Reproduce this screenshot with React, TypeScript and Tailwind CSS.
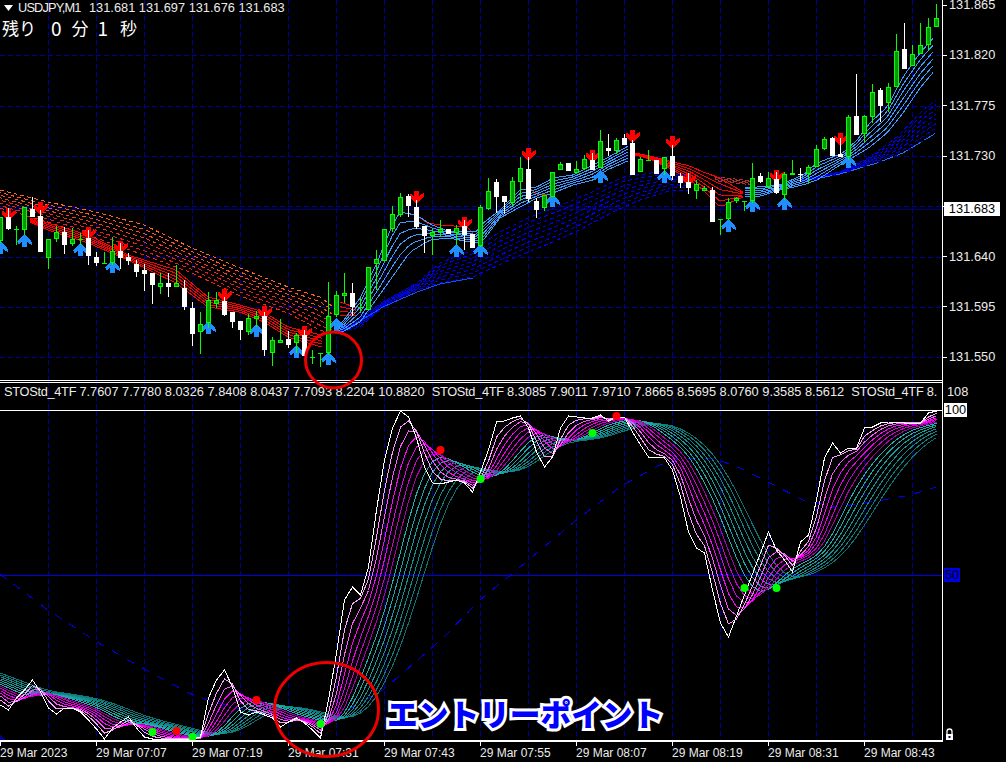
type Pt = [number, number];
type Band = { top: Pt[]; bottom: Pt[] };

// g = up bar, w = down bar: [kind, bodyTop, bodyBottom, wickTop, wickBottom]
const bars: [string, number, number, number, number][] = [
  ["g",217,241,217,243],["w",217,229,208,230],["g",229,229,226,245],["g",207,230,207,235],["w",209,217,197,217],
  ["w",216,252,210,252],["g",239,258,239,269],["g",232,239,226,242],["w",232,245,227,254],["g",239,244,228,246],
  ["g",239,239,233,245],["w",238,256,230,265],["w",257,263,252,266],["g",263,263,252,263],["g",251,263,237,265],
  ["w",251,258,243,269],["w",257,261,253,265],["w",264,272,260,277],["w",270,274,264,291],["w",273,285,273,304],
  ["g",283,287,273,294],["w",283,287,273,297],["g",283,287,265,287],["w",288,307,280,310],["w",308,334,302,346],
  ["g",324,332,312,354],["g",300,323,292,328],["g",300,304,292,308],["w",301,315,297,316],["w",312,322,312,328],
  ["w",321,330,321,340],["g",318,332,314,335],["g",316,319,311,327],["w",316,350,312,356],["g",340,353,337,366],
  ["g",340,343,319,343],["w",339,345,331,348],["g",335,343,333,353],["w",335,356,330,356],["g",357,357,350,364],
  ["g",353,353,353,367],["g",316,353,282,355],["g",295,315,291,317],["g",293,296,273,303],["w",293,307,283,316],
  ["g",307,307,297,312],["g",267,310,267,310],["g",259,264,250,290],["g",229,261,229,261],["g",214,229,206,232],
  ["g",197,215,193,217],["w",196,206,194,217],["w",207,227,200,229],["w",226,236,226,253],["g",232,236,229,255],
  ["g",229,232,220,237],["w",229,234,229,234],["g",228,233,225,245],["w",226,235,220,250],["w",234,248,234,248],
  ["g",207,246,205,247],["g",191,209,178,210],["w",182,197,179,213],["w",196,202,196,214],["g",181,203,177,207],
  ["g",168,182,157,200],["w",169,199,157,202],["w",201,210,198,218],["g",195,208,195,211],["g",172,197,172,197],
  ["g",164,170,162,170],["w",163,171,163,171],["g",169,173,161,173],["g",159,169,155,170],["w",160,170,153,170],
  ["g",141,168,130,168],["w",148,151,134,156],["g",140,151,138,154],["w",138,145,134,145],["w",143,175,140,175],
  ["g",159,172,157,172],["g",160,160,150,161],["w",160,174,160,174],["g",157,169,157,175],["w",156,176,145,180],
  ["w",176,183,173,188],["w",182,188,173,194],["g",184,191,180,199],["g",188,191,186,191],["w",190,222,187,222],
  ["g",219,219,219,235],["g",202,219,198,220],["g",198,201,197,203],["g",201,201,201,211],["g",178,201,163,203],
  ["w",176,182,173,183],["g",178,187,172,188],["w",179,193,172,194],["g",174,195,172,200],["g",173,175,160,175],
  ["w",174,175,168,182],["g",167,174,165,183],["g",149,167,145,167],["g",139,149,137,150],["w",138,156,137,156],
  ["w",154,157,138,157],["g",117,157,115,160],["w",116,135,74,135],["g",116,134,115,142],["g",92,117,84,123],
  ["w",90,106,88,122],["g",87,103,83,112],["g",51,87,34,87],["w",49,69,23,69],["g",54,66,45,66],
  ["g",45,54,23,54],["g",27,45,18,51],["g",18,27,4,27],
];

const upArrows: Pt[] = [[0,241],[3,234],[10,243],[14,260],[26,321],[32,324],[37,345],[41,352],[42,318],[57,244],[60,244],[69,194],[75,170],[83,170],[91,219],[94,199],[98,197],[106,155]];
const downArrows: Pt[] = [[1,208],[5,202],[11,227],[15,241],[28,289],[33,306],[38,326],[52,191],[58,217],[66,148],[74,150],[79,130],[84,136],[86,173],[97,170],[105,133]];

// white line of the lower window, one value per bar
const stoch = [705,710,698,690,680,692,708,714,708,708,712,720,729,739,728,722,717,728,737,739,739,739,739,739,739,737,698,680,670,687,712,715,712,715,718,727,722,718,723,730,738,700,653,600,587,595,567,510,460,428,411,417,438,467,483,484,482,480,483,492,472,450,422,421,418,416,428,452,467,457,428,416,417,418,418,415,421,417,417,432,445,457,457,458,470,497,532,548,553,590,623,637,616,595,574,553,532,550,560,572,542,535,500,458,443,453,448,448,428,427,423,422,422,423,423,423,413,411];

const pinkTeal = ["#ff9cff","#ff55ff","#ff00ff","#e600e6","#cc00cc","#aa00aa","#20b0b0","#1ca6a6","#189c9c","#149292","#108888","#0e7e7e","#0c7474"];

const redSlow: Band = {
  top: [[0,190],[48,202],[96,212],[144,225],[192,248],[240,268],[288,287],[320,297],[332,306]],
  bottom: [[0,208],[48,222],[96,238],[144,255],[192,273],[240,296],[288,313],[320,330],[332,334]],
};
const redFast: Band = {
  top: [[30,218],[48,223],[88,235],[128,255],[176,270],[208,297],[240,305],[264,312],[288,327],[325,336]],
  bottom: [[30,222],[48,230],[88,243],[128,260],[176,283],[208,307],[240,312],[264,322],[288,337],[325,348]],
};
const redFast2: Band = {
  top: [[635,153],[650,156],[673,162],[690,166],[703,172],[720,178],[743,192]],
  bottom: [[635,155],[650,159],[673,170],[690,180],[703,190],[720,207],[743,197]],
};
const blueFast: Band = {
  top: [[336,328],[344,320],[360,298],[376,265],[392,226],[400,212],[416,215],[432,225],[448,231],[476,232],[482,224],[500,210],[520,190],[537,187],[553,178],[573,175],[593,165],[607,158],[630,145]],
  bottom: [[336,332],[344,331],[360,322],[383,290],[410,252],[430,240],[448,238],[476,243],[482,242],[500,218],[520,207],[537,198],[553,193],[573,185],[593,180],[607,170],[630,160]],
};
const blueFast2: Band = {
  top: [[745,187],[757,187],[780,185],[803,175],[817,163],[843,153],[857,140],[870,123],[887,107],[903,77],[920,53],[936,35]],
  bottom: [[745,196],[757,197],[780,190],[803,185],[817,180],[843,163],[857,155],[870,147],[887,133],[903,113],[920,88],[936,69]],
};
const blueSlow: Band = {
  top: [[340,330],[383,302],[417,283],[440,263],[473,250],[500,232],[530,217],[557,207],[590,193],[623,177],[673,170],[690,178]],
  bottom: [[340,332],[360,327],[383,307],[417,290],[440,283],[473,277],[503,263],[528,252],[553,242],[577,231],[617,210],[640,200],[673,190],[690,190]],
};
const blueSlow2: Band = {
  top: [[800,180],[840,172],[870,157],[897,137],[923,110],[936,100]],
  bottom: [[800,182],[820,178],[840,174],[877,163],[903,153],[936,133]],
};
const longLine: Pt[] = [[0,574],[48,610],[97,642],[137,665],[183,690],[200,698],[250,712],[300,722],[333,718],[383,690],[443,638],[480,600],[513,573],[550,542],[580,517],[623,485],[660,465],[683,458],[713,458],[740,468],[770,483],[803,500],[837,507],[883,500],[910,495],[936,487]];

const stoDots: [number, number, string][] = [
  [152,732,"#00ff00"],[192,737,"#00ff00"],[320,724,"#00ff00"],[480,479,"#00ff00"],[592,433,"#00ff00"],[744,588,"#00ff00"],[776,588,"#00ff00"],
  [176,731,"#ff0000"],[256,700,"#ff0000"],[440,450,"#ff0000"],[616,416,"#ff0000"],
];

const axisPrices = ["131.865","131.820","131.775","131.730","","131.640","131.595","131.550"];
const timeLabels = ["29 Mar 2023","29 Mar 07:07","29 Mar 07:19","29 Mar 07:31","29 Mar 07:43","29 Mar 07:55","29 Mar 08:07","29 Mar 08:19","29 Mar 08:31","29 Mar 08:43"];
const titleBlocks = ["7.7607 7.7780 8.0326 7.8408 8.0437 7.7093 8.2204 10.8820  ", "8.3085 7.9011 7.9710 7.8665 8.5695 8.0760 9.3585 8.5612  ", "8."];
const gridX = Array.from({ length: 19 }, (_, i) => (i + 1) * 48 + 0.5);
const gridY = [55.5, 106.5, 156.5, 206.5, 257.5, 307.5, 357.5];

function interp(pts: Pt[], x: number) {
  if (x <= pts[0][0]) return pts[0][1];
  for (let i = 1; i < pts.length; i++) {
    if (x <= pts[i][0]) {
      const [x0, y0] = pts[i - 1];
      const [x1, y1] = pts[i];
      return y0 + ((y1 - y0) * (x - x0)) / (x1 - x0);
    }
  }
  return pts[pts.length - 1][1];
}

function bandLines(band: Band, count: number) {
  const start = Math.max(band.top[0][0], band.bottom[0][0]);
  const end = Math.min(band.top[band.top.length - 1][0], band.bottom[band.bottom.length - 1][0]);
  const out: string[] = [];
  for (let k = 0; k < count; k++) {
    const t = count === 1 ? 0 : k / (count - 1);
    const p: string[] = [];
    for (let x = start; x <= end; x += 4) {
      const a = interp(band.top, x);
      const b = interp(band.bottom, x);
      p.push(`${x},${(a + (b - a) * t).toFixed(1)}`);
    }
    out.push(p.join(" "));
  }
  return out;
}

function Ribbon({ band, count, colors, dash }: { band: Band; count: number; colors: string[]; dash?: string }) {
  return (
    <g fill="none" strokeWidth={1}>
      {bandLines(band, count).map((points, k) => (
        <polyline key={k} points={points} stroke={colors[k % colors.length]} strokeDasharray={dash} strokeDashoffset={k * 3} />
      ))}
    </g>
  );
}

function Grid({ y1, y2 }: { y1: number; y2: number }) {
  return (
    <g stroke="#000096" strokeWidth={1} strokeDasharray="5 3">
      {gridX.map((x) => (
        <line key={x} x1={x} x2={x} y1={y1} y2={y2} />
      ))}
    </g>
  );
}

function Arrow({ n, y, up }: { n: number; y: number; up: boolean }) {
  const x = n * 8 + 0.5;
  const d = up
    ? `M${x} ${y}l7 7.5v3.5l-4.5 -3v5h-5v-5l-4.5 3v-3.5z`
    : `M${x} ${y + 13}l7 -7.5v-3.5l-4.5 3v-5h-5v5l-4.5 -3v3.5z`;
  return <path d={d} fill={up ? "#1e8fff" : "#ff0000"} />;
}

function Candle({ n }: { n: number }) {
  const [kind, top, bottom, wickTop, wickBottom] = bars[n];
  const x = n * 8;
  const main = kind === "g" ? "#00ff00" : "#ffffff";
  const h = bottom - top;
  return (
    <g>
      <rect x={x} y={wickTop} width={1} height={Math.max(wickBottom - wickTop, 1)} fill={main} />
      {h < 2 ? (
        <rect x={x - 2} y={top} width={5} height={Math.max(h, 1)} fill={main} />
      ) : kind === "g" ? (
        <rect x={x - 1.5} y={top + 0.5} width={4} height={h - 1} fill="#009a00" stroke={main} strokeWidth={1} />
      ) : (
        <rect x={x - 2} y={top} width={5} height={h} fill={main} />
      )}
    </g>
  );
}

// each ribbon line lags the line before it
function stochRibbon() {
  const out: number[][] = [];
  let prev = stoch;
  for (let k = 0; k < 13; k++) {
    const line: number[] = [];
    let v = 692 - k * 1.8;
    prev.forEach((p) => {
      v += (p - v) * 0.61;
      line.push(v);
    });
    out.push(line);
    prev = line;
  }
  return out;
}

const toPoints = (line: number[]) => line.map((y, i) => `${i * 8 + 0.5},${y.toFixed(1)}`).join(" ");

function PriceChart() {
  return (
    <svg width={942} height={380} viewBox="0 0 942 380" shapeRendering="crispEdges" className="block">
      <Grid y1={0} y2={380} />
      <g stroke="#000096" strokeWidth={1} strokeDasharray="5 3">
        {gridY.map((y) => (
          <line key={y} x1={0} x2={942} y1={y} y2={y} />
        ))}
      </g>
      <line x1={0} x2={942} y1={209.5} y2={209.5} stroke="#00007a" strokeWidth={1} />

      <Ribbon band={redSlow} count={8} colors={["#ff6a20","#ff5a20","#f85020","#f04020","#e83020","#e02020","#e02020","#ff2000"]} dash="4 3" />
      <Ribbon band={{ top: [[715,177],[755,181]], bottom: [[715,181],[755,185]] }} count={4} colors={["#b03030"]} dash="4 2" />
      <Ribbon band={blueSlow} count={8} colors={["#0000d8","#0000ff"]} dash="4 3" />
      <Ribbon band={blueSlow2} count={8} colors={["#0000d8","#0000ff"]} dash="4 3" />
      <polyline points="345,330 383,307 417,292 440,284 473,278" fill="none" stroke="#0a50ff" strokeWidth={1} />
      <polyline points="820,178 840,174 877,163 903,153 936,133" fill="none" stroke="#1e70ff" strokeWidth={1} strokeDasharray="12 4" />

      <Ribbon band={redFast} count={5} colors={["#ff0000"]} />
      <Ribbon band={redFast2} count={6} colors={["#ff0000"]} />
      <Ribbon band={{ top: [[340,302],[357,308]], bottom: [[340,316],[357,315]] }} count={4} colors={["#ff0000"]} />
      <polyline points="418,216 427,223 440,225 467,227 473,233" fill="none" stroke="#ff0000" />
      <polyline points="530,189 537,194 547,194" fill="none" stroke="#ff0000" />
      <Ribbon band={blueFast} count={6} colors={["#3c9cff"]} />
      <Ribbon band={blueFast2} count={6} colors={["#3c9cff"]} />

      {upArrows.map(([n, y]) => (
        <Arrow key={`u${n}`} n={n} y={y} up />
      ))}
      {downArrows.map(([n, y]) => (
        <Arrow key={`d${n}`} n={n} y={y} up={false} />
      ))}
      {bars.map((_, n) => (
        <Candle key={n} n={n} />
      ))}
    </svg>
  );
}

function StochChart() {
  const lines = stochRibbon();
  return (
    <svg width={942} height={329} viewBox="0 411 942 329" shapeRendering="crispEdges" className="block">
      <Grid y1={411} y2={740} />
      <line x1={0} x2={942} y1={575.5} y2={575.5} stroke="#0000e6" strokeWidth={1} />
      <polyline points={longLine.map((p) => p.join(",")).join(" ")} fill="none" stroke="#0000e6" strokeWidth={1} strokeDasharray="8 9" />
      <path d="M0 735L6 740H0z" fill="#000090" />
      <g fill="none" strokeWidth={1}>
        {lines
          .map((line, k) => <polyline key={k} points={toPoints(line)} stroke={pinkTeal[k]} />)
          .reverse()}
        <polyline points={toPoints(stoch)} stroke="#ffffff" />
      </g>
      <g shapeRendering="auto">
        {stoDots.map(([x, y, c]) => (
          <circle key={`${x}-${y}`} cx={x + 0.5} cy={y} r={4} fill={c} />
        ))}
      </g>
    </svg>
  );
}

export default function App() {
  return (
    <div className="relative w-[1006px] h-[762px] overflow-hidden bg-black text-[12.8px] leading-[14px] text-[#ececec] font-['Liberation_Sans',sans-serif]">
      {/* Price window */}
      <div className="flex h-[380px] overflow-hidden">
        <div className="relative w-[943px] shrink-0 border-r border-white">
          <PriceChart />
          <div className="absolute left-[4px] top-[1px] flex items-center whitespace-pre">
            <svg width={9} height={6} viewBox="0 0 9 6" className="mr-[5px]">
              <path d="M0 0H9L4.5 6z" fill="#ffffff" />
            </svg>
            <span className="w-[71px] tracking-[-0.85px]">USDJPY,M1</span>
            <span>131.681 131.697 131.676 131.683</span>
          </div>
          <div className="absolute left-[2px] top-[18px] flex items-center text-white text-[17px] leading-[20px] font-['Noto_Sans_CJK_JP',sans-serif]">
            <span>残り</span>
            <span className="ml-[15px] text-[19px]">0</span>
            <span className="ml-[10px]">分</span>
            <span className="ml-[9px] text-[19px]">1</span>
            <span className="ml-[12px]">秒</span>
          </div>
        </div>
        <div className="relative flex-1">
          <div className="-mt-[20px]">
            {axisPrices.map((p, i) => (
              <div key={i} className="flex h-[50.3px] items-center">
                <span className="h-px w-[4px] bg-white" />
                <span className="ml-[2px]">{p}</span>
              </div>
            ))}
          </div>
          <div className="absolute left-[1px] top-[202px] flex h-[14px] w-[56px] items-center justify-center bg-white text-black">
            131.683
          </div>
        </div>
      </div>

      {/* Indicator title strip */}
      <div className="flex h-[31px]">
        <div className="relative w-[943px] shrink-0 overflow-hidden border-r border-white">
          <svg width={942} height={31} viewBox="0 380 942 31" shapeRendering="crispEdges" className="absolute left-0 top-0">
            <Grid y1={380} y2={411} />
          </svg>
          <div className="relative h-px bg-white" />
          <div className="relative mt-px h-px bg-white" />
          <div className="relative flex h-[27px] whitespace-pre pl-[4px] pt-[2px]">
            {titleBlocks.map((values) => (
              <span key={values}>
                <span className="tracking-[-0.3px]">STOStd_4TF </span>
                {values}
              </span>
            ))}
          </div>
          <div className="relative h-px bg-white" />
        </div>
        <div className="pl-[4px] pt-[5px]">108</div>
      </div>

      {/* Indicator window */}
      <div className="flex h-[329px]">
        <div className="w-[943px] shrink-0 border-r border-white">
          <StochChart />
        </div>
        <div className="relative flex-1">
          <div className="absolute left-[1px] -top-[8px] flex h-[14px] w-[23px] items-center justify-center bg-white text-black">100</div>
          <div className="absolute left-[1px] top-[157px] flex h-[14px] w-[16px] items-center justify-center bg-[#0000e6] text-black">50</div>
          <svg width={9} height={12} viewBox="0 0 9 12" className="absolute left-[2px] bottom-0">
            <path d="M2 6V3.5a2.5 2.5 0 0 1 5 0V6" fill="none" stroke="#ffffff" strokeWidth={1.3} />
            <path d="M1 6h7v6H1z" fill="#ffffff" />
            <path d="M3.5 8h2v2h-2z" fill="#000060" />
          </svg>
        </div>
      </div>

      {/* Time axis */}
      <div className="h-[2px] w-[943px] bg-white" />
      <div className="flex w-[943px] text-[12px]">
        {timeLabels.map((t) => (
          <div key={t} className="w-[96px] shrink-0 whitespace-pre">
            <div className="h-[4px] w-px bg-white" />
            <div>{t}</div>
          </div>
        ))}
      </div>

      {/* Hand drawn marks on top of the screenshot */}
      <svg width={1006} height={762} viewBox="0 0 1006 762" className="pointer-events-none absolute left-0 top-0">
        <circle cx={333.5} cy={360} r={28} fill="none" stroke="#ee0000" strokeWidth={3} />
        <ellipse cx={326.5} cy={709.5} rx={52} ry={47} fill="none" stroke="#ee0000" strokeWidth={3} />
      </svg>
      <div className="absolute left-[387px] top-[691px] whitespace-pre text-[30.7px] leading-[44px] font-black text-[#0000ff] font-['Noto_Sans_CJK_JP',sans-serif] [-webkit-text-stroke:6px_white] [paint-order:stroke_fill]">
        エントリーポイント
      </div>
    </div>
  );
}
